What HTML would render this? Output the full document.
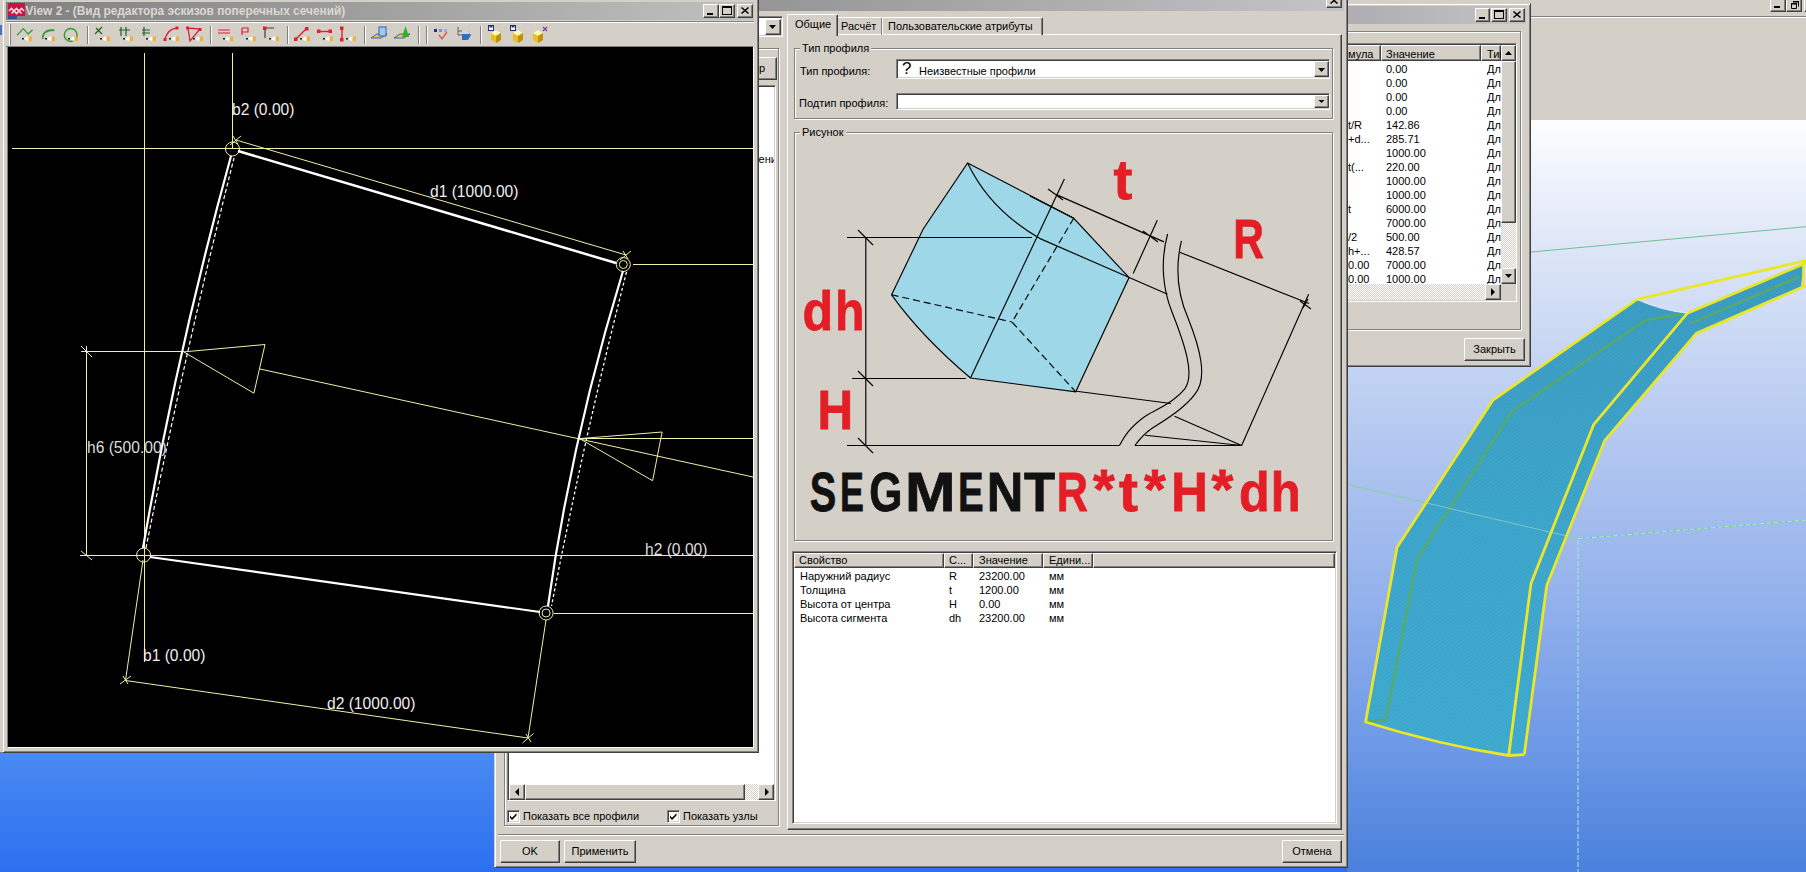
<!DOCTYPE html>
<html><head><meta charset="utf-8">
<style>
*{box-sizing:border-box;margin:0;padding:0}
html,body{width:1806px;height:872px;overflow:hidden;position:relative;font-family:"Liberation Sans",sans-serif;font-size:11px;color:#000}
.a{position:absolute}
.g{background:#d4d0c8}
.out{border:1px solid;border-color:#d4d0c8 #404040 #404040 #d4d0c8;box-shadow:inset 1px 1px #fff,inset -1px -1px #808080}
.in{border:1px solid;border-color:#808080 #fff #fff #808080;box-shadow:inset 1px 1px #404040,inset -1px -1px #d4d0c8}
.btn{background:#d4d0c8;border:1px solid;border-color:#fff #404040 #404040 #fff;box-shadow:inset -1px -1px #808080;text-align:center}
.grp{border:1px solid #808080;box-shadow:1px 1px #fff,inset 1px 1px #fff}
.t{position:absolute;white-space:nowrap;line-height:13px}
</style></head><body>
<!-- viewport background -->
<div class="a" style="left:0;top:0;width:1806px;height:872px;background:linear-gradient(to bottom,#d4d0c8 0,#d4d0c8 120px,#fcfdff 120px,#e6ecf9 210px,#d2def5 300px,#b8cbf1 420px,#93b1ec 600px,#6c98e6 750px,#4a80dc 872px)"></div>
<div class="a" style="left:0;top:700px;width:1347px;height:172px;background:linear-gradient(to bottom,#4d8cf2 0,#4a8af2 52px,#2c70f0 172px)"></div>
<!-- 3d viewport -->
<svg class="a" style="left:0;top:120px" width="1806" height="752">
<defs>
<linearGradient id="tg" x1="0" y1="0" x2="0" y2="1"><stop offset="0" stop-color="#3c9cc2"/><stop offset="0.5" stop-color="#3ea6cc"/><stop offset="1" stop-color="#40acd2"/></linearGradient>
<pattern id="hatch" width="3" height="3" patternUnits="userSpaceOnUse" patternTransform="rotate(-35)"><rect width="3" height="3" fill="none"/><rect width="3" height="1" fill="#2a80a0" opacity="0.18"/></pattern>
</defs>
<g transform="translate(0,-120)">
<path d="M1531 252L1806 226.7M1350 485L1578 538.7L1806 520" stroke="#70c090" stroke-width="1" fill="none"/>
<path d="M1578 540V872M1578 538.7L1806 520" stroke="#a0f0d0" stroke-width="1" stroke-dasharray="5 2" fill="none"/>
<path d="M1636.9 299.3L1493 400.1L1397 547.6L1365.6 722Q1440 745 1508.7 755.5L1524.3 754.6L1546.7 585.6L1604.8 440.3L1696.3 333.4L1801 286.7L1803.5 263L1799.7 265.2L1687.4 313.2Q1660 310 1636.9 299.3Z" fill="url(#tg)"/>
<path d="M1636.9 299.3L1493 400.1L1397 547.6L1365.6 722Q1440 745 1508.7 755.5L1524.3 754.6L1546.7 585.6L1604.8 440.3L1696.3 333.4L1801 286.7L1803.5 263L1799.7 265.2L1687.4 313.2Q1660 310 1636.9 299.3Z" fill="url(#hatch)"/>
<path d="M1365.6 722L1385.8 719.7L1417 558.8L1506.5 420.2L1511.2 412.1L1645 320.4L1681.8 314M1691.2 323.3L1799.7 276.6" stroke="#58ac62" stroke-width="2.3" fill="none"/>
<path d="M1350 485L1578 538.7" stroke="#a0e0c0" stroke-width="1" fill="none" opacity="0.6"/>
<g stroke="#eae628" stroke-width="2.8" fill="none" stroke-linejoin="round">
<path d="M1806 260.5L1636.9 299.3L1493 400.1L1397 547.6L1365.6 722Q1440 745 1508.7 755.5L1524.3 754.6"/>
<path d="M1508.7 755.5L1531 583.4L1593.6 424.7L1687.4 313.2L1806 263"/>
<path d="M1524.3 754.6L1546.7 585.6L1604.8 440.3L1696.3 333.4L1806 285.5"/>
<path d="M1803.5 261V287"/>
</g>
<path d="M1636.9 299.3Q1660 310 1687.4 313.2" stroke="#e8f0ff" stroke-width="1" fill="none"/>
</g>
</svg>
<!-- app top grey right -->
<div class="a g" style="left:1347px;top:0;width:459px;height:120px"></div>
<div class="a" style="left:1347px;top:16px;width:459px;height:1px;background:#808080"></div>
<div class="a" style="left:1347px;top:17px;width:459px;height:1px;background:#fff"></div>
<div class="a btn" style="left:1770px;top:-3px;width:16px;height:15px"></div>
<div class="a btn" style="left:1786px;top:-3px;width:16px;height:15px"></div>
<div class="a btn" style="left:1804px;top:-3px;width:16px;height:15px"></div>
<svg class="a" style="left:1770px;top:-3px" width="36" height="15"><rect x="4" y="9" width="6" height="2" fill="#000"/>
<path d="M21.5 6.5h5v5h-5zM23.5 4.5h5v5" fill="none" stroke="#000"/><rect x="21" y="6" width="6" height="1.5"/><rect x="23" y="4" width="6" height="1.5"/></svg>

<!-- table window -->
<div class="a" style="left:1300px;top:3px;width:231px;height:364px;background:#d4d0c8;border:1px solid;border-color:#d4d0c8 #404040 #404040 #d4d0c8;box-shadow:inset 1px 1px #fff,inset -1px -1px #808080"></div>
<div class="a" style="left:1304px;top:6px;width:222px;height:18px;background:linear-gradient(to right,#a8a8ac,#c4c4c8)"></div>
<div class="a btn" style="left:1475px;top:8px;width:15px;height:14px"></div>
<div class="a btn" style="left:1491px;top:8px;width:16px;height:14px"></div>
<div class="a btn" style="left:1509px;top:8px;width:16px;height:14px"></div>
<svg class="a" style="left:1475px;top:8px" width="50" height="14">
<rect x="4" y="9" width="6" height="2" fill="#000"/>
<rect x="19.5" y="2.5" width="9" height="8" fill="none" stroke="#000"/><rect x="19" y="2" width="10" height="2" fill="#000"/>
<path d="M38.5 3.5l7 6M45.5 3.5l-7 6" stroke="#000" stroke-width="1.6"/>
</svg>
<div class="a grp" style="left:1300px;top:31px;width:221px;height:299px"></div>
<div class="a" style="left:1300px;top:43px;width:217px;height:259px;background:#fff;border:1px solid;border-color:#808080 #fff #fff #808080;box-shadow:inset 1px 1px #404040,inset -1px -1px #d4d0c8"></div>
<div class="a btn" style="left:1300px;top:45px;width:81px;height:16px"></div>
<div class="a btn" style="left:1381px;top:45px;width:100px;height:16px"></div>
<div class="a btn" style="left:1481px;top:45px;width:20px;height:16px"></div>
<div class="t" style="left:1348px;top:48px">мула</div>
<div class="t" style="left:1386px;top:48px">Значение</div>
<div class="t" style="left:1487px;top:48px;width:14px;overflow:hidden">Тип</div>
<div class="t" style="left:1348px;top:62px;line-height:14px"><br><br><br><br>t/R<br>+d...<br><br>t(...<br><br><br>t<br><br>/2<br>h+...<br>0.00<br>0.00</div>
<div class="t" style="left:1386px;top:62px;line-height:14px">0.00<br>0.00<br>0.00<br>0.00<br>142.86<br>285.71<br>1000.00<br>220.00<br>1000.00<br>1000.00<br>6000.00<br>7000.00<br>500.00<br>428.57<br>7000.00<br>1000.00</div>
<div class="t" style="left:1487px;top:62px;line-height:14px;width:14px;overflow:hidden">Дл<br>Дл<br>Дл<br>Дл<br>Дл<br>Дл<br>Дл<br>Дл<br>Дл<br>Дл<br>Дл<br>Дл<br>Дл<br>Дл<br>Дл<br>Дл</div>
<div class="a" style="left:1501px;top:45px;width:15px;height:239px;background:repeating-conic-gradient(#d4d0c8 0 25%,#fff 0 50%) 0 0/2px 2px"></div>
<div class="a btn" style="left:1501px;top:45px;width:15px;height:16px"></div>
<div class="a btn" style="left:1501px;top:61px;width:15px;height:162px"></div>
<div class="a btn" style="left:1501px;top:268px;width:15px;height:16px"></div>
<svg class="a" style="left:1501px;top:45px" width="15" height="240"><path d="M4 10h7l-3.5-4z M4 229h7l-3.5 4z" fill="#000"/></svg>
<div class="a" style="left:1348px;top:284px;width:153px;height:16px;background:repeating-conic-gradient(#d4d0c8 0 25%,#fff 0 50%) 0 0/2px 2px"></div>
<div class="a btn" style="left:1485px;top:284px;width:16px;height:16px"></div>
<svg class="a" style="left:1485px;top:284px" width="16" height="16"><path d="M6 4v8l4-4z" fill="#000"/></svg>
<div class="a g" style="left:1501px;top:284px;width:15px;height:16px"></div>
<div class="a btn" style="left:1464px;top:338px;width:61px;height:23px;line-height:21px">Закрыть</div>
<!-- dialog -->
<div class="a" style="left:494px;top:-12px;width:854px;height:880px;background:#d4d0c8;border:1px solid;border-color:#d4d0c8 #404040 #404040 #d4d0c8;box-shadow:inset 1px 1px #fff,inset -1px -1px #808080"></div>
<div class="a" style="left:498px;top:-8px;width:846px;height:18.5px;background:linear-gradient(to right,#808080,#c4c4c8)"></div>
<div class="a btn" style="left:1326px;top:-6px;width:16px;height:14px"></div>
<svg class="a" style="left:1326px;top:-6px" width="16" height="14"><path d="M4.5 3.5l7 6M11.5 3.5l-7 6" stroke="#000" stroke-width="1.6"/></svg>
<!-- left panel -->
<div class="a" style="left:500px;top:16px;width:283px;height:21px;background:#fff;border:1px solid;border-color:#808080 #fff #fff #808080;box-shadow:inset 1px 1px #404040,inset -1px -1px #d4d0c8"></div>
<div class="a btn" style="left:765px;top:18.5px;width:16px;height:16.5px"></div>
<svg class="a" style="left:765px;top:18px" width="16" height="17"><path d="M4 7h7l-3.5 4z" fill="#000"/></svg>
<div class="a grp" style="left:504px;top:48px;width:275px;height:778px"></div>
<div class="a btn" style="left:690px;top:57px;width:87px;height:23px"></div><div class="t" style="left:759px;top:62px">р</div>
<div class="a" style="left:507px;top:85px;width:269px;height:716px;background:#fff;border:1px solid;border-color:#808080 #fff #fff #808080;box-shadow:inset 1px 1px #404040,inset -1px -1px #d4d0c8"></div>
<div class="a" style="left:700px;top:150px;width:74px;height:16px;overflow:hidden"><div class="t" style="right:-9px;top:3px">Поперечное сечение</div></div>
<div class="a" style="left:509px;top:784px;width:265px;height:16px;background:repeating-conic-gradient(#d4d0c8 0 25%,#fff 0 50%) 0 0/2px 2px"></div>
<div class="a btn" style="left:509px;top:784px;width:16px;height:16px"></div>
<div class="a btn" style="left:525px;top:784px;width:220px;height:16px"></div>
<div class="a btn" style="left:758px;top:784px;width:16px;height:16px"></div>
<svg class="a" style="left:509px;top:784px" width="266" height="16"><path d="M10 4v8l-4-4z M256 4v8l4-4z" fill="#000"/></svg>
<div class="a" style="left:507px;top:810px;width:13px;height:13px;background:#fff;border:1px solid;border-color:#808080 #fff #fff #808080;box-shadow:inset 1px 1px #404040,inset -1px -1px #d4d0c8"></div>
<svg class="a" style="left:507px;top:810px" width="13" height="13"><path d="M3 5.5l2 2.2 4.5-4.5v2.2l-4.5 4.5-2-2.2z" fill="#000"/></svg>
<div class="t" style="left:523px;top:810px">Показать все профили</div>
<div class="a" style="left:667px;top:810px;width:13px;height:13px;background:#fff;border:1px solid;border-color:#808080 #fff #fff #808080;box-shadow:inset 1px 1px #404040,inset -1px -1px #d4d0c8"></div>
<svg class="a" style="left:667px;top:810px" width="13" height="13"><path d="M3 5.5l2 2.2 4.5-4.5v2.2l-4.5 4.5-2-2.2z" fill="#000"/></svg>
<div class="t" style="left:683px;top:810px">Показать узлы</div>
<!-- bottom -->
<div class="a" style="left:498px;top:834px;width:846px;height:1px;background:#808080"></div>
<div class="a" style="left:498px;top:835px;width:846px;height:1px;background:#fff"></div>
<div class="a btn" style="left:500px;top:840px;width:60px;height:23px;line-height:21px">OK</div>
<div class="a btn" style="left:564px;top:840px;width:72px;height:23px;line-height:21px">Применить</div>
<div class="a btn" style="left:1282px;top:840px;width:60px;height:23px;line-height:21px">Отмена</div>
<!-- tabs -->
<div class="a" style="left:787px;top:34px;width:555px;height:796px;border:1px solid;border-color:#fff #404040 #404040 #fff;box-shadow:inset -1px -1px #808080"></div>
<div class="a" style="left:837px;top:17px;width:46px;height:18px;border:1px solid;border-bottom:none;border-color:#fff #404040 #404040 #fff;box-shadow:inset -1px 0 #808080;border-radius:2px 2px 0 0"></div>
<div class="t" style="left:841px;top:20px">Расчёт</div>
<div class="a" style="left:882px;top:17px;width:161px;height:18px;border:1px solid;border-bottom:none;border-color:#fff #404040 #404040 #fff;box-shadow:inset -1px 0 #808080;border-radius:2px 2px 0 0"></div>
<div class="t" style="left:888px;top:20px">Пользовательские атрибуты</div>
<div class="a g" style="left:787px;top:14px;width:51px;height:22px;border:1px solid;border-bottom:none;border-color:#fff #404040 #404040 #fff;box-shadow:inset -1px 0 #808080;border-radius:2px 2px 0 0"></div>
<div class="t" style="left:795px;top:18px">Общие</div>
<!-- group type -->
<div class="a grp" style="left:794px;top:48px;width:539px;height:71px"></div>
<div class="t g" style="left:800px;top:42px;padding:0 2px">Тип профиля</div>
<div class="t" style="left:800px;top:65px">Тип профиля:</div>
<div class="a" style="left:896px;top:59px;width:434px;height:20px;background:#fff;border:1px solid;border-color:#808080 #fff #fff #808080;box-shadow:inset 1px 1px #404040,inset -1px -1px #d4d0c8"></div>
<div class="t" style="left:902px;top:60px;font-size:17px;line-height:17px">?</div>
<div class="t" style="left:919px;top:65px">Неизвестные профили</div>
<div class="a btn" style="left:1314px;top:61px;width:15px;height:16px"></div>
<svg class="a" style="left:1314px;top:61px" width="15" height="16"><path d="M4 7h7l-3.5 4z" fill="#000"/></svg>
<div class="t" style="left:799px;top:97px">Подтип профиля:</div>
<div class="a" style="left:896px;top:93px;width:434px;height:17px;background:#fff;border:1px solid;border-color:#808080 #fff #fff #808080;box-shadow:inset 1px 1px #404040,inset -1px -1px #d4d0c8"></div>
<div class="a btn" style="left:1314px;top:95px;width:15px;height:13px"></div>
<svg class="a" style="left:1314px;top:95px" width="15" height="13"><path d="M4.5 5h6l-3 3z" fill="#000"/></svg>
<!-- picture group -->
<div class="a grp" style="left:794px;top:132px;width:539px;height:409px"></div>
<div class="t g" style="left:800px;top:126px;padding:0 2px">Рисунок</div>
<div id="pic"></div>
<svg class="a" style="left:796px;top:140px" width="536" height="400">
<g transform="translate(-796,-140)">
<path d="M967.6 162.9L1073.7 218.3L1129.1 277.6L1075.7 391.8L970.5 378Q921 336 891.6 294.8L923.2 229Z" fill="#9dd7e8"/>
<g fill="none" stroke="#000" stroke-width="1.15">
<path d="M967.6 162.9L1073.7 218.3L1129.1 277.6L1075.7 391.8L970.5 378Q921 336 891.6 294.8L923.2 229Z"/>
<path d="M967.6 162.9Q990 210 1040.7 238.9L1167.6 294.2"/>
<path d="M1030 196.1L1073.7 218.3" />
<path d="M847 237.5H1032M852 378.5H966M847 445.5H1119.4M1135 445.5H1241.6M865.8 237V446"/>
<path d="M858 230l15 15M858 371l15 15M858 438l15 15"/>
<path d="M1064.4 178.9L970.5 378"/>
<path d="M1157.3 220.2L1133.2 273.5"/>
<path d="M1055.8 194.4L1164 241.9M1048 189l15 11M1143 231l15 11"/>
<path d="M1179.6 252.2L1309 303.5M1300 301l11 8M1303 308l5-9"/>
<path d="M1308.6 294.2L1241.6 445.5"/>
<path d="M1076.4 391.2L1171 403.5M1174.5 416.3L1241.6 445.5M1145.2 435.2L1241.6 445.5"/>
<path d="M1167.6 234C1160 262 1163 290 1172 312C1185 345 1195 375 1184.8 388.8C1172 405 1150 412 1145.2 416.3C1130 427 1124 437 1119.4 445.5"/>
<path d="M1181.4 240.8C1175 268 1178 295 1188 318C1200 348 1208 378 1195.1 393.9C1185 408 1165 420 1152.1 428.3C1145 433 1139 440 1134.9 445.5"/>
<path d="M1073.7 218.3L1012 322L1075.7 391.8M891.6 294.8L1012 322" stroke-dasharray="7 4"/>
</g>
<g font-family="Liberation Sans" font-weight="bold" font-size="55" stroke-width="0.8">
<text transform="translate(809.7,511) scale(0.723,1)" fill="#111" stroke="#111">S</text>
<text transform="translate(840.1,511) scale(0.652,1)" fill="#111" stroke="#111">E</text>
<text transform="translate(869.3,511) scale(0.775,1)" fill="#111" stroke="#111">G</text>
<text transform="translate(904.9,511) scale(1.101,1)" fill="#111" stroke="#111">M</text>
<text transform="translate(958.0,511) scale(0.700,1)" fill="#111" stroke="#111">E</text>
<text transform="translate(986.8,511) scale(0.921,1)" fill="#111" stroke="#111">N</text>
<text transform="translate(1024.0,511) scale(0.927,1)" fill="#111" stroke="#111">T</text>
<text transform="translate(1056.8,511) scale(0.785,1)" fill="#e41e26" stroke="#e41e26">R</text>
<text transform="translate(1092.9,507.5) scale(1.016,1)" fill="#e41e26" stroke="#e41e26">*</text>
<text transform="translate(1119.1,511) scale(1.034,1)" fill="#e41e26" stroke="#e41e26">t</text>
<text transform="translate(1144.0,507.5) scale(1.016,1)" fill="#e41e26" stroke="#e41e26">*</text>
<text transform="translate(1171.3,511) scale(0.921,1)" fill="#e41e26" stroke="#e41e26">H</text>
<text transform="translate(1211.6,507.5) scale(1.021,1)" fill="#e41e26" stroke="#e41e26">*</text>
<text transform="translate(1238.9,511.4) scale(0.913,1)" fill="#e41e26" stroke="#e41e26">d</text>
<text transform="translate(1270.8,511.4) scale(0.889,1)" fill="#e41e26" stroke="#e41e26">h</text>
<text transform="translate(1113.6,198.5) scale(1.028,1)" fill="#e41e26" stroke="#e41e26">t</text>
<text transform="translate(1233.3,258) scale(0.774,1)" fill="#e41e26" stroke="#e41e26">R</text>
<text transform="translate(802.6,330) scale(0.913,1)" fill="#e41e26" stroke="#e41e26">d</text>
<text transform="translate(834.9,330) scale(0.877,1)" fill="#e41e26" stroke="#e41e26">h</text>
<text transform="translate(817.4,428.6) scale(0.897,1)" fill="#e41e26" stroke="#e41e26">H</text>
</g>
</g></svg>

<!-- properties list -->
<div class="a" style="left:792px;top:551px;width:545px;height:273px;background:#fff;border:1px solid;border-color:#808080 #fff #fff #808080;box-shadow:inset 1px 1px #404040,inset -1px -1px #d4d0c8"></div>
<div class="a g" style="left:794px;top:553px;width:541px;height:15px"></div>
<div class="a btn" style="left:794px;top:553px;width:150px;height:15px"></div>
<div class="a btn" style="left:944px;top:553px;width:29px;height:15px"></div>
<div class="a btn" style="left:973px;top:553px;width:70px;height:15px"></div>
<div class="a btn" style="left:1043px;top:553px;width:50px;height:15px"></div>
<div class="a btn" style="left:1093px;top:553px;width:242px;height:15px"></div>
<div class="t" style="left:799px;top:554px">Свойство</div>
<div class="t" style="left:949px;top:554px">С...</div>
<div class="t" style="left:979px;top:554px">Значение</div>
<div class="t" style="left:1049px;top:554px">Едини...</div>
<div class="t" style="left:800px;top:569px;line-height:14px">Наружний радиус<br>Толщина<br>Высота от центра<br>Высота сигмента</div>
<div class="t" style="left:949px;top:569px;line-height:14px">R<br>t<br>H<br>dh</div>
<div class="t" style="left:979px;top:569px;line-height:14px">23200.00<br>1200.00<br>0.00<br>23200.00</div>
<div class="t" style="left:1049px;top:569px;line-height:14px">мм<br>мм<br>мм<br>мм</div>
<!-- sketch window -->
<div class="a g" style="left:0;top:0;width:3px;height:752px"></div><div class="a" style="left:0;top:25px;width:2px;height:10px;background:#5070c0"></div>
<div class="a" style="left:2px;top:-2px;width:757px;height:755px;background:#d4d0c8;border:1px solid;border-color:#d4d0c8 #404040 #404040 #d4d0c8;box-shadow:inset 1px 1px #fff,inset -1px -1px #808080"></div>
<div class="a" style="left:6px;top:2px;width:748px;height:18px;background:linear-gradient(to right,#808080,#c0c0c0)"></div>
<div class="a" style="left:8px;top:3px;width:16px;height:16px">
<svg width="17" height="16"><rect x="0" y="0" width="17" height="13" fill="#c81440"/><rect x="0" y="13" width="9" height="3" fill="#3050a0"/><path d="M1 8l2.5-2.5l2.5 2.5l2.5-2.5l2.5 2.5l2.5-2.5l2.5 2.5M3.5 10.5l2.5-2.5l2.5 2.5l2.5-2.5l2.5 2.5" stroke="#ffd8e4" stroke-width="1.6" fill="none"/></svg></div>
<div class="t" style="left:25.5px;top:4px;font-weight:bold;font-size:11.88px;color:#dcd8d0;line-height:14px">View 2 - (Вид редактора эскизов поперечных сечений)</div>
<div class="a btn" style="left:703px;top:4px;width:16px;height:14px"></div>
<div class="a btn" style="left:719px;top:4px;width:16px;height:14px"></div>
<div class="a btn" style="left:737px;top:4px;width:16px;height:14px"></div>
<svg class="a" style="left:703px;top:4px" width="50" height="14">
<rect x="4" y="9" width="6" height="2" fill="#000"/>
<rect x="19.5" y="2.5" width="9" height="8" fill="none" stroke="#000"/><rect x="19" y="2" width="10" height="2" fill="#000"/>
<path d="M38.5 3.5l7 6M45.5 3.5l-7 6" stroke="#000" stroke-width="1.6"/>
</svg>
<div class="a" style="left:6px;top:21px;width:748px;height:1px;background:#808080"></div>
<div class="a" style="left:6px;top:22px;width:748px;height:1px;background:#fff"></div>
<div class="a" style="left:6px;top:46px;width:748px;height:1px;background:#606060"></div>
<svg class="a" style="left:0;top:0" width="760" height="48"><path d="M9.5 24v21" stroke="#fff"/><path d="M10.5 24v21" stroke="#808080"/><path d="M87.5 26v18" stroke="#808080"/><path d="M88.5 26v18" stroke="#fff"/><path d="M210.5 26v18" stroke="#808080"/><path d="M211.5 26v18" stroke="#fff"/><path d="M287.5 26v18" stroke="#808080"/><path d="M288.5 26v18" stroke="#fff"/><path d="M364.5 26v18" stroke="#808080"/><path d="M365.5 26v18" stroke="#fff"/><path d="M418.5 26v18" stroke="#808080"/><path d="M419.5 26v18" stroke="#fff"/><path d="M426.5 26v18" stroke="#808080"/><path d="M427.5 26v18" stroke="#fff"/><path d="M480.5 26v18" stroke="#808080"/><path d="M481.5 26v18" stroke="#fff"/><path d="M17 35.3L23.3 28.6L28.2 34L32.6 29.8" stroke="#3a9a3a" stroke-width="1.3" fill="none"/><path d="M22 38.7h2" stroke="#202020" stroke-width="1.4"/><path d="M24 38.7l3 -2h2v4h-2z" fill="#fff"/><rect x="28.5" y="36.5" width="3.5" height="4.5" fill="#f0b040"/><path d="M42.8 38.8Q42 30 54.3 30" stroke="#3a9a3a" stroke-width="1.8" fill="none"/><path d="M45 38.7h2" stroke="#202020" stroke-width="1.4"/><path d="M47 38.7l3 -2h2v4h-2z" fill="#fff"/><rect x="51.5" y="36.5" width="3.5" height="4.5" fill="#f0b040"/><circle cx="70.7" cy="35" r="6.4" stroke="#3a9a3a" stroke-width="1.5" fill="none"/><path d="M68 38.7h2" stroke="#202020" stroke-width="1.4"/><path d="M70 38.7l3 -2h2v4h-2z" fill="#fff"/><rect x="74.5" y="36.5" width="3.5" height="4.5" fill="#f0b040"/><path d="M95 34l7-7M96 28l6 6" stroke="#206020" stroke-width="1.2" fill="none"/><path d="M100 38.7h2" stroke="#202020" stroke-width="1.4"/><path d="M102 38.7l3 -2h2v4h-2z" fill="#fff"/><rect x="106.5" y="36.5" width="3.5" height="4.5" fill="#f0b040"/><path d="M119 30h11M121 27v9M126 27v9" stroke="#206020" stroke-width="1.2" fill="none"/><path d="M123 38.7h2" stroke="#202020" stroke-width="1.4"/><path d="M125 38.7l3 -2h2v4h-2z" fill="#fff"/><rect x="129.5" y="36.5" width="3.5" height="4.5" fill="#f0b040"/><path d="M142 30h8M142 33h8M144 27v9" stroke="#206020" stroke-width="1.2" fill="none"/><path d="M146 38.7h2" stroke="#202020" stroke-width="1.4"/><path d="M148 38.7l3 -2h2v4h-2z" fill="#fff"/><rect x="152.5" y="36.5" width="3.5" height="4.5" fill="#f0b040"/><path d="M165 40Q167 29 177 28" stroke="#e02030" stroke-width="1.3" fill="none"/><rect x="163.5" y="38" width="3" height="3" fill="#e02030"/><rect x="175.5" y="26.5" width="3" height="3" fill="#e02030"/><path d="M169 38.7h2" stroke="#202020" stroke-width="1.4"/><path d="M171 38.7l3 -2h2v4h-2z" fill="#fff"/><rect x="175.5" y="36.5" width="3.5" height="4.5" fill="#f0b040"/><path d="M188 28L190 41L200 29Z" stroke="#e02030" stroke-width="1.3" fill="none"/><rect x="186" y="26.5" width="3" height="3" fill="#e02030"/><rect x="198.5" y="28" width="3" height="3" fill="#e02030"/><path d="M193 38.7h2" stroke="#202020" stroke-width="1.4"/><path d="M195 38.7l3 -2h2v4h-2z" fill="#fff"/><rect x="199.5" y="36.5" width="3.5" height="4.5" fill="#f0b040"/><path d="M218 30h12M218 33h12" stroke="#e02030" stroke-width="1" fill="none"/><path d="M223 38.7h2" stroke="#202020" stroke-width="1.4"/><path d="M225 38.7l3 -2h2v4h-2z" fill="#fff"/><rect x="229.5" y="36.5" width="3.5" height="4.5" fill="#f0b040"/><path d="M242 28v7M242 28h6v4h-6" stroke="#e02030" stroke-width="1.2" fill="none"/><path d="M246 38.7h2" stroke="#202020" stroke-width="1.4"/><path d="M248 38.7l3 -2h2v4h-2z" fill="#fff"/><rect x="252.5" y="36.5" width="3.5" height="4.5" fill="#f0b040"/><path d="M265 28v10M265 28h9" stroke="#404040" stroke-width="1.2" fill="none"/><rect x="263" y="26.5" width="3.5" height="3.5" fill="#e02030"/><path d="M269 38.7h2" stroke="#202020" stroke-width="1.4"/><path d="M271 38.7l3 -2h2v4h-2z" fill="#fff"/><rect x="275.5" y="36.5" width="3.5" height="4.5" fill="#f0b040"/><path d="M296 39L306 29" stroke="#e02030" stroke-width="1.4" fill="none"/><rect x="294" y="37.5" width="3.5" height="3.5" fill="#e02030"/><rect x="305" y="27" width="3.5" height="3.5" fill="#e02030"/><path d="M300 38.7h2" stroke="#202020" stroke-width="1.4"/><path d="M302 38.7l3 -2h2v4h-2z" fill="#fff"/><rect x="306.5" y="36.5" width="3.5" height="4.5" fill="#f0b040"/><path d="M318 31.5h13" stroke="#e02030" stroke-width="1.4" fill="none"/><rect x="317" y="29.5" width="3.5" height="3.5" fill="#e02030"/><rect x="328.5" y="29.5" width="3.5" height="3.5" fill="#e02030"/><path d="M323 38.7h2" stroke="#202020" stroke-width="1.4"/><path d="M325 38.7l3 -2h2v4h-2z" fill="#fff"/><rect x="329.5" y="36.5" width="3.5" height="4.5" fill="#f0b040"/><path d="M342 28v12" stroke="#e02030" stroke-width="1.4" fill="none"/><rect x="340" y="26.5" width="3.5" height="3.5" fill="#e02030"/><rect x="340" y="38" width="3.5" height="3.5" fill="#e02030"/><path d="M346 38.7h2" stroke="#202020" stroke-width="1.4"/><path d="M348 38.7l3 -2h2v4h-2z" fill="#fff"/><rect x="352.5" y="36.5" width="3.5" height="4.5" fill="#f0b040"/><path d="M371 38l6-4h10l-6 4z" fill="#e8d040" stroke="#4060a0" stroke-width="1"/><rect x="379" y="27" width="7" height="9" fill="#a0c8f0" stroke="#3060a0" stroke-width="1"/><path d="M394 38l6-4h10l-6 4z" fill="#e8d040" stroke="#4060a0" stroke-width="1"/><path d="M402 37l3.5-11l3.5 11z" fill="#30b030"/><rect x="434" y="29" width="3" height="3" fill="#203080"/><rect x="439" y="29" width="3" height="3" fill="#8090c0"/><rect x="444" y="29" width="3" height="3" fill="#a0b0d0"/><path d="M439 35l3 4l5-7" stroke="#e05050" stroke-width="1.3" fill="none"/><path d="M458 27v8h4M458 31h4" stroke="#606060" stroke-width="1" fill="none"/><path d="M462 31h6l3 4l-3 5h-6z" fill="#3070c0"/><path d="M462 31h6l2 3h-8z" fill="#c0d8f0"/><rect x="488.5" y="25.5" width="5" height="5" fill="#fff" stroke="#203080" stroke-width="1"/><rect x="489.5" y="25.5" width="3" height="2" fill="#203080"/><path d="M491 33l5-3l5 3v7l-5 3l-5-3z" fill="#e8c020"/><path d="M491 33l5-3l5 3l-5 3z" fill="#fff8c0"/><path d="M496 36l5-3v7l-5 3z" fill="#c09010"/><rect x="510.5" y="25.5" width="5" height="5" fill="#fff" stroke="#203080" stroke-width="1"/><rect x="511.5" y="25.5" width="3" height="2" fill="#203080"/><path d="M513 33l5-3l5 3v7l-5 3l-5-3z" fill="#e8c020"/><path d="M513 33l5-3l5 3l-5 3z" fill="#fff8c0"/><path d="M518 36l5-3v7l-5 3z" fill="#c09010"/><path d="M533 33l5-3l5 3v7l-5 3l-5-3z" fill="#e8c020"/><path d="M533 33l5-3l5 3l-5 3z" fill="#fff8c0"/><path d="M538 36l5-3v7l-5 3z" fill="#c09010"/><path d="M543 27l4 4M547 27l-4 4" stroke="#8040a0" stroke-width="1.2"/></svg>
<div class="a" style="left:7px;top:46px;width:747px;height:702px;border:1px solid;border-color:#808080 #fff #fff #808080"></div>
<div class="a" style="left:8px;top:47px;width:745px;height:700px;background:#000;overflow:hidden">
<svg width="746" height="700" style="position:absolute;left:0;top:0">
<g transform="translate(-8,-47)" fill="none">
<g stroke="#f0eea8" stroke-width="1">
<path d="M12 148.5H753M633 264.5H753M80 555.5H753M554 613.5H753M81 351.5H184M580 438.5H753"/>
<path d="M144.5 53V662M232.5 53V149M86.5 346V556"/>
<path d="M236 140L626 255M143 560L125.5 680.5L528 738M546 620L528 738"/>
<path d="M183.7 351.9L265 344.5L253.9 393.2Z M579.6 438.6L662.1 432L652.6 480.7Z M260 369L753 477"/>
<circle cx="232.5" cy="149" r="7"/><circle cx="623.3" cy="264.5" r="7"/><circle cx="623.3" cy="264.5" r="4"/>
<circle cx="546.1" cy="613" r="7"/><circle cx="143.6" cy="555.1" r="7"/><circle cx="546.1" cy="613" r="4"/>
<path d="M81 346l11 11M81 551l11 9M120 684l11-8M123 676l5 8M522.5 743l11-9.5M526 734l5 8M230 145l11-9M233 136l5 8M620 260l11-9M623 251l5 8"/>
</g>
<g stroke="#fff">
<path d="M238 151L616 263" stroke-width="2.5"/>
<path d="M623 271Q571.5 439 548 606" stroke-width="2.2"/>
<path d="M150 557L540 612" stroke-width="2.2"/>
<path d="M143 548Q177 352 231 156" stroke-width="2.2"/>
<path d="M146 548Q185 353 234 158" stroke-width="1.2" stroke-dasharray="4 2.5"/>
<path d="M626.5 272Q584 439 551.5 606" stroke-width="1.3" stroke-dasharray="3 2.5"/>
</g>
</g></svg>
<div class="t" style="left:224px;top:54px;font-size:15.6px;color:#eee;line-height:18px">b2 (0.00)</div>
<div class="t" style="left:422px;top:136px;font-size:15.6px;color:#eee;line-height:18px">d1 (1000.00)</div>
<div class="t" style="left:79px;top:392px;font-size:15.6px;color:#ddd;line-height:18px">h6 (500.00)</div>
<div class="t" style="left:637px;top:494px;font-size:15.6px;color:#ddd;line-height:18px">h2 (0.00)</div>
<div class="t" style="left:135px;top:600px;font-size:15.6px;color:#eee;line-height:18px">b1 (0.00)</div>
<div class="t" style="left:319px;top:648px;font-size:15.6px;color:#eee;line-height:18px">d2 (1000.00)</div>
</div>
</body></html>
